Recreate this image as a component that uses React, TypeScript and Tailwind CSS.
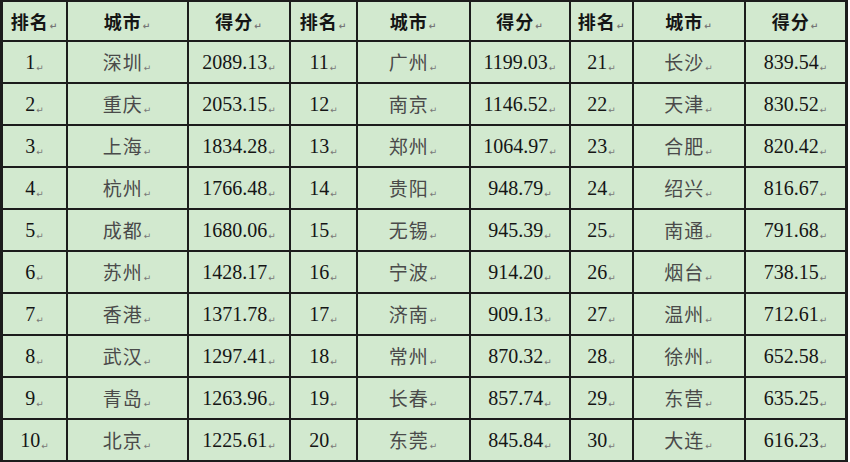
import React from "react";

type Row = { rank: number; city: string; score: string };

const rows: Row[] = [
  { rank: 1, city: "深圳", score: "2089.13" },
  { rank: 2, city: "重庆", score: "2053.15" },
  { rank: 3, city: "上海", score: "1834.28" },
  { rank: 4, city: "杭州", score: "1766.48" },
  { rank: 5, city: "成都", score: "1680.06" },
  { rank: 6, city: "苏州", score: "1428.17" },
  { rank: 7, city: "香港", score: "1371.78" },
  { rank: 8, city: "武汉", score: "1297.41" },
  { rank: 9, city: "青岛", score: "1263.96" },
  { rank: 10, city: "北京", score: "1225.61" },
  { rank: 11, city: "广州", score: "1199.03" },
  { rank: 12, city: "南京", score: "1146.52" },
  { rank: 13, city: "郑州", score: "1064.97" },
  { rank: 14, city: "贵阳", score: "948.79" },
  { rank: 15, city: "无锡", score: "945.39" },
  { rank: 16, city: "宁波", score: "914.20" },
  { rank: 17, city: "济南", score: "909.13" },
  { rank: 18, city: "常州", score: "870.32" },
  { rank: 19, city: "长春", score: "857.74" },
  { rank: 20, city: "东莞", score: "845.84" },
  { rank: 21, city: "长沙", score: "839.54" },
  { rank: 22, city: "天津", score: "830.52" },
  { rank: 23, city: "合肥", score: "820.42" },
  { rank: 24, city: "绍兴", score: "816.67" },
  { rank: 25, city: "南通", score: "791.68" },
  { rank: 26, city: "烟台", score: "738.15" },
  { rank: 27, city: "温州", score: "712.61" },
  { rank: 28, city: "徐州", score: "652.58" },
  { rank: 29, city: "东营", score: "635.25" },
  { rank: 30, city: "大连", score: "616.23" },
];

const serif = "font-['Liberation_Serif','Noto_Sans_CJK_SC',serif]";
const cjk = "font-['Noto_Sans_CJK_SC',sans-serif]";

function Mark() {
  return (
    <span className="ml-[1px] self-end mb-[9px] text-[9px] leading-none text-[#777] font-['DejaVu_Sans',sans-serif]">
      ↵
    </span>
  );
}

function Cell({ children, className = "" }: { children: React.ReactNode; className?: string }) {
  return (
    <div className={`flex items-center justify-center bg-[#d2e9cf] ${className}`}>
      {children}
      <Mark />
    </div>
  );
}

function HeaderCell({ label }: { label: string }) {
  return (
    <Cell className={`h-[38px] ${cjk} text-[18px] font-bold text-[#151515] tracking-[1px]`}>
      <span>{label}</span>
    </Cell>
  );
}

export default function App() {
  const headers = ["排名", "城市", "得分", "排名", "城市", "得分", "排名", "城市", "得分"];
  const lines = Array.from({ length: 10 }, (_, i) => [rows[i], rows[i + 10], rows[i + 20]]);

  return (
    <div className="w-[850px] h-[462px] bg-white">
      <div className="w-[848px] border-y-2 border-l-[3px] border-r-[3px] border-[#1c1c1c] bg-[#1c1c1c]">
        <div className="grid grid-cols-[63px_119px_100px_65px_111px_98px_61px_110px_99px] gap-[2px]">
          {headers.map((h, i) => (
            <HeaderCell key={i} label={h} />
          ))}
          {lines.map((group, r) =>
            group.map((row) => (
              <React.Fragment key={`${r}-${row.rank}`}>
                <Cell className={`h-[40px] ${serif} text-[20px] text-[#151515]`}>
                  <span>{row.rank}</span>
                </Cell>
                <Cell className={`h-[40px] ${cjk} text-[19px] text-[#4a4a4a] tracking-[1px]`}>
                  <span>{row.city}</span>
                </Cell>
                <Cell className={`h-[40px] ${serif} text-[20px] text-[#151515]`}>
                  <span>{row.score}</span>
                </Cell>
              </React.Fragment>
            ))
          )}
        </div>
      </div>
    </div>
  );
}
